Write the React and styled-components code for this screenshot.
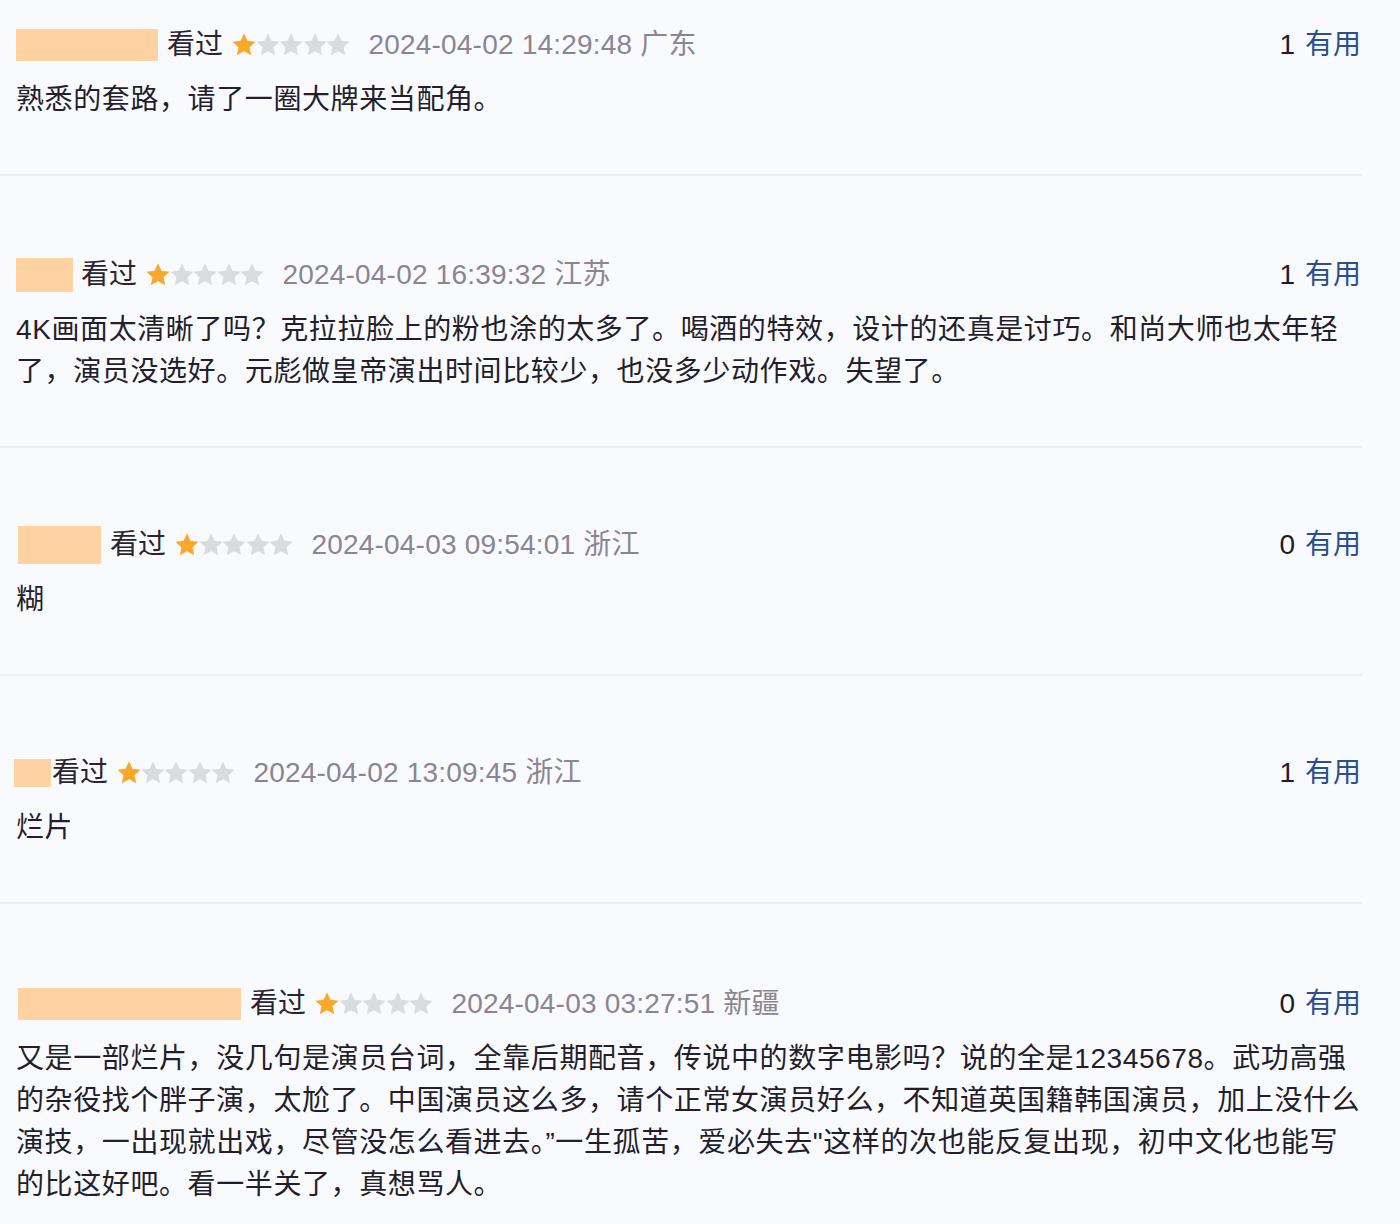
import React from "react";
import styled, { createGlobalStyle } from "styled-components";

const Global = createGlobalStyle`
  html, body { margin: 0; padding: 0; background: #f9fafd; }
  body { font-family: "Liberation Sans", "Noto Sans CJK SC", sans-serif; }
`;

const Page = styled.div`
  width: 1400px;
  min-height: 1224px;
  background: #f9fafd;
  overflow: hidden;
`;

const List = styled.ul`
  list-style: none;
  margin: 0;
  padding: 0;
  width: 1362px;
`;

const Item = styled.li`
  padding: ${(p) => p.$top}px 0 53px 16px;
  border-bottom: 2px solid #eaedf3;
`;

const Header = styled.div`
  display: flex;
  align-items: center;
  height: 40px;
  font-size: 28px;
  line-height: 40px;
`;

const Avatar = styled.span`
  flex: none;
  width: ${(p) => p.$w}px;
  height: ${(p) => p.$h}px;
  margin-left: ${(p) => p.$ml}px;
  margin-right: ${(p) => p.$gap}px;
  background: #ffd3a1;
`;

const Seen = styled.span`
  color: #2a2430;
  margin-right: 8px;
`;

const Stars = styled.span`
  display: flex;
  align-items: center;
  margin-right: 17px;
  & > svg + svg { margin-left: -2.4px; }
`;

const Meta = styled.span`
  color: #8a8592;
  letter-spacing: 0.2px;
`;

const Useful = styled.span`
  margin-left: auto;
  margin-right: 1px;
  color: #2b4f8c;
`;

const Count = styled.span`
  color: #1f1b28;
  margin-right: 10px;
`;

const Content = styled.p`
  margin: 14px 0 0;
  font-size: 28px;
  line-height: 42px;
  letter-spacing: 0.6px;
  color: #241e2c;
`;

const Star = ({ on }) => (
  <svg width="26" height="26" viewBox="0 0 24 24">
    <path
      d="M12 1.2l3.2 6.9 7.5.85-5.6 5.1 1.58 7.4L12 17.7l-6.68 3.75 1.58-7.4-5.6-5.1 7.5-.85z"
      fill={on ? "#fba82a" : "#d8dbe0"}
    />
  </svg>
);

const reviews = [
  {
    top: 25,
    av: { w: 142, h: 32, ml: 0, gap: 9 },
    date: "2024-04-02 14:29:48 广东",
    count: 1,
    text: "熟悉的套路，请了一圈大牌来当配角。",
  },
  {
    top: 79,
    av: { w: 57, h: 34, ml: 0, gap: 8 },
    date: "2024-04-02 16:39:32 江苏",
    count: 1,
    text: "4K画面太清晰了吗？克拉拉脸上的粉也涂的太多了。喝酒的特效，设计的还真是讨巧。和尚大师也太年轻了，演员没选好。元彪做皇帝演出时间比较少，也没多少动作戏。失望了。",
  },
  {
    top: 77,
    av: { w: 83, h: 38, ml: 2, gap: 9 },
    date: "2024-04-03 09:54:01 浙江",
    count: 0,
    text: "糊",
  },
  {
    top: 77,
    av: { w: 37, h: 28, ml: -2, gap: 1 },
    date: "2024-04-02 13:09:45 浙江",
    count: 1,
    text: "烂片",
  },
  {
    top: 80,
    av: { w: 223, h: 32, ml: 2, gap: 9 },
    date: "2024-04-03 03:27:51 新疆",
    count: 0,
    text: "又是一部烂片，没几句是演员台词，全靠后期配音，传说中的数字电影吗？说的全是12345678。武功高强的杂役找个胖子演，太尬了。中国演员这么多，请个正常女演员好么，不知道英国籍韩国演员，加上没什么演技，一出现就出戏，尽管没怎么看进去。”一生孤苦，爱必失去\"这样的次也能反复出现，初中文化也能写的比这好吧。看一半关了，真想骂人。",
  },
];

export default function App() {
  return (
    <Page>
      <Global />
      <List>
        {reviews.map((r, i) => (
          <Item key={i} $top={r.top}>
            <Header>
              <Avatar $w={r.av.w} $h={r.av.h} $ml={r.av.ml} $gap={r.av.gap} />
              <Seen>看过</Seen>
              <Stars>
                {[0, 1, 2, 3, 4].map((s) => (
                  <Star key={s} on={s === 0} />
                ))}
              </Stars>
              <Meta>{r.date}</Meta>
              <Useful>
                <Count>{r.count}</Count>有用
              </Useful>
            </Header>
            <Content>{r.text}</Content>
          </Item>
        ))}
      </List>
    </Page>
  );
}
